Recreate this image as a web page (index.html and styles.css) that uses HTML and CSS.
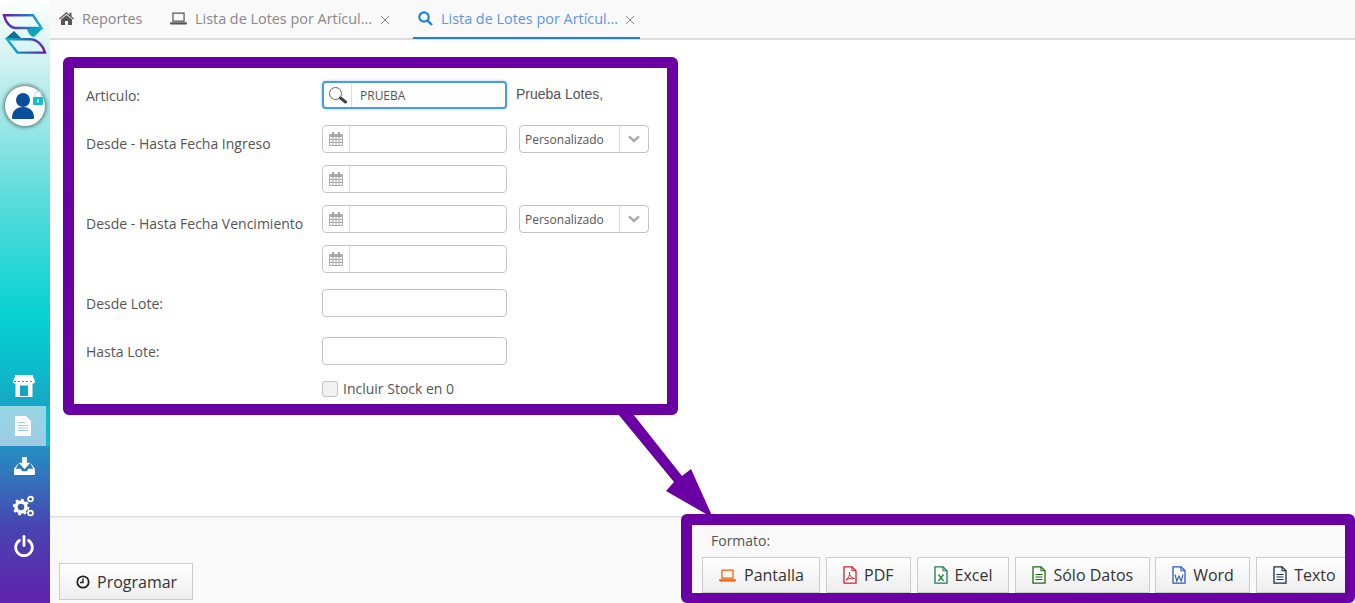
FILE: index.html
```html
<!DOCTYPE html>
<html lang="es">
<head>
<meta charset="utf-8">
<title>Lista de Lotes por Artículo</title>
<link rel="stylesheet" href="styles.css">
</head>
<body>
<svg class="defs" width="0" height="0">
  <defs>
    <symbol id="cal" viewBox="0 0 14 14"><path fill="#aaa" d="M3 0h2v2h4V0h2v2h2a1 1 0 0 1 1 1v10a1 1 0 0 1-1 1H1a1 1 0 0 1-1-1V3a1 1 0 0 1 1-1h2zM1 5v2h2.400V5zm3.400 0v2h2.100V5zm3.100 0v2h2.100V5zm3.100 0v2H13V5zM1 8v2h2.400V8zm3.400 0v2h2.100V8zm3.100 0v2h2.100V8zm3.100 0v2H13V8zM1 11v2h2.400v-2zm3.400 0v2h2.100v-2zm3.100 0v2h2.100v-2zm3.100 0v2H13v-2z"/></symbol>
    <symbol id="chev" viewBox="0 0 12 8"><path fill="none" stroke="#aaa" stroke-width="2.600" d="M1 1.400l5 4.600 5-4.600"/></symbol>
    <symbol id="laptop" viewBox="0 0 18 14"><path fill="none" stroke="currentColor" stroke-width="1.300" d="M3 1.200h12v8.600H3z"/><path fill="currentColor" d="M0 11h18v1.400a1 1 0 0 1-1 1H1a1 1 0 0 1-1-1z"/></symbol>
    <symbol id="file" viewBox="0 0 14 18"><path fill="#fff" fill-opacity=".6" stroke="currentColor" stroke-width="1.300" d="M1 .8h8l4 4v12.400H1z"/><path fill="none" stroke="currentColor" stroke-width="1.100" d="M9 .8v4h4"/></symbol>
  </defs>
</svg>
<div class="app">
  <aside class="sidebar">
    <svg class="logo" width="50" height="42" viewBox="0 0 50 42">
      <defs>
        <linearGradient id="lg1" x1="0" x2="1"><stop offset="0" stop-color="#6a1fa8"/><stop offset=".6" stop-color="#2a6fc0"/><stop offset="1" stop-color="#13b5cc"/></linearGradient>
        <linearGradient id="lg2" x1="0" x2="1"><stop offset="0" stop-color="#13b5cc"/><stop offset=".5" stop-color="#2a6fc0"/><stop offset="1" stop-color="#6a1fa8"/></linearGradient>
      </defs>
      <path fill="none" stroke="url(#lg1)" stroke-width="2.400" d="M4 2.200h29l8.500 12.800H16C10 15 5.500 9 4 2.200z"/>
      <path fill="none" stroke="url(#lg2)" stroke-width="2.400" d="M7 26.200h23c7 0 13 6 15 13.400H17.500z"/>
      <path fill="#0d6f8f" d="M6 25l8-7 7 7z"/>
      <path fill="#0fa6b4" d="M27 16h15l-8 8c-3 0-6-4-7-8z"/>
    </svg>
    <div class="avatar">
      <svg width="40" height="40" viewBox="0 0 40 40">
        <circle cx="18" cy="14" r="7" fill="#0b4f9c"/>
        <path fill="#0b4f9c" d="M7 32c0-7 4-11 11-11s11 4 11 11c0 1-1 1-2 1H9c-1 0-2 0-2-1z"/>
        <rect x="28" y="11" width="10" height="8" rx="1" fill="#12c0c4"/>
        <path fill="none" stroke="#bfe9ec" stroke-width="1.400" d="M30 11V8.500a3 3 0 0 1 6 0V11"/>
        <rect x="32.200" y="13.500" width="1.600" height="3" fill="#fff"/>
      </svg>
    </div>
    <nav class="side-nav">
      <a class="side-item">
        <svg width="24" height="24" viewBox="0 0 24 24"><path fill="#fff" d="M3.500 1h17L23 7.500c0 1.500-1 2-2 2h-.5V23h-17V9.500H3c-1 0-2-.5-2-2z"/><path fill="#14a4c4" d="M8 11.500h8V22H8z"/><path fill="none" stroke="#14a4c4" stroke-width="1" stroke-dasharray="2 2" d="M2 7.500h20"/></svg>
      </a>
      <a class="side-item side-item-active">
        <svg width="16" height="20" viewBox="0 0 16 20"><path fill="#fff" d="M0 0h11l5 5v15H0z"/><path fill="#9ccde6" d="M3 6h7v1H3zM3 9h10v1H3zM3 11.500h10v1H3zM3 14h10v1H3z"/></svg>
      </a>
      <a class="side-item">
        <svg width="21" height="18" viewBox="0 0 22 19"><path fill="#fff" d="M8.500 0h5v6H17l-6 7-6-7h3.500z"/><path fill="#fff" d="M4 7L0 12.500V19h22v-6.500L18 7h-.6l2.800 5.500H15l-1.500 2.500h-5L7 12.500H1.800L4.600 7z"/></svg>
      </a>
      <a class="side-item">
        <svg width="22" height="22" viewBox="0 0 22 22"><circle cx="8" cy="12" r="5" fill="none" stroke="#fff" stroke-width="3.400"/><circle cx="8" cy="12" r="7.300" fill="none" stroke="#fff" stroke-width="2" stroke-dasharray="2.800 2.900"/><circle cx="17.500" cy="4" r="2.400" fill="none" stroke="#fff" stroke-width="1.800"/><circle cx="17.500" cy="18" r="2.400" fill="none" stroke="#fff" stroke-width="1.800"/></svg>
      </a>
      <a class="side-item">
        <svg width="20" height="22" viewBox="0 0 20 22"><path fill="none" stroke="#fff" stroke-width="2.800" stroke-linecap="round" d="M5.500 5.500a8.300 8.300 0 1 0 9 0"/><path fill="none" stroke="#fff" stroke-width="2.800" stroke-linecap="round" d="M10 1.500v9"/></svg>
      </a>
    </nav>
  </aside>

  <div class="content">
    <header class="tabs">
      <a class="tab tab-home">
        <svg class="tab-icon" width="15" height="13" viewBox="0 0 15 13"><path fill="#555" d="M7.500 0L0 6.500l.8.900L7.500 1.800l6.700 5.600.8-.9-2.500-2.100V.800h-2v2.100z"/><path fill="#555" d="M7.500 3L2 7.600V13h4V9h3v4h4V7.600z"/></svg>
        <span>Reportes</span>
      </a>
      <a class="tab tab-second">
        <svg class="tab-icon tab-laptop" width="17" height="13"><use href="#laptop"/></svg>
        <span>Lista de Lotes por Artícul...</span>
        <svg class="tab-close" width="10" height="10" viewBox="0 0 10 10"><path fill="none" stroke="#888" d="M1 1l8 8M9 1l-8 8"/></svg>
      </a>
      <a class="tab tab-active">
        <svg class="tab-icon" width="15" height="15" viewBox="0 0 15 15"><circle cx="6" cy="6" r="4.700" fill="none" stroke="#1e7fe0" stroke-width="2.200"/><path fill="none" stroke="#1e7fe0" stroke-width="2.400" d="M9.500 9.500l4.500 4.500"/></svg>
        <span>Lista de Lotes por Artícul...</span>
        <svg class="tab-close" width="10" height="10" viewBox="0 0 10 10"><path fill="none" stroke="#888" d="M1 1l8 8M9 1l-8 8"/></svg>
      </a>
    </header>

    <main class="main">
      <form class="form">
        <div class="row row-articulo">
          <label class="label">Articulo:</label>
          <div class="input-group input-focus">
            <span class="addon addon-search">
              <svg width="20" height="18" viewBox="0 0 20 18"><circle cx="7.500" cy="7.500" r="6" fill="none" stroke="#666" stroke-width="1"/><path fill="none" stroke="#444" stroke-width="3" stroke-linecap="round" d="M12.500 12l5 4"/></svg>
            </span>
            <span class="value">PRUEBA</span>
          </div>
          <span class="desc">Prueba Lotes,</span>
        </div>

        <div class="row row-dates">
          <label class="label label-date">Desde - Hasta Fecha Ingreso</label>
          <div class="date-stack">
            <div class="input-group"><span class="addon"><svg width="14" height="14"><use href="#cal"/></svg></span></div>
            <div class="input-group"><span class="addon"><svg width="14" height="14"><use href="#cal"/></svg></span></div>
          </div>
          <div class="select"><span class="select-text">Personalizado</span><span class="select-arrow"><svg width="12" height="8"><use href="#chev"/></svg></span></div>
        </div>

        <div class="row row-dates">
          <label class="label label-date">Desde - Hasta Fecha Vencimiento</label>
          <div class="date-stack">
            <div class="input-group"><span class="addon"><svg width="14" height="14"><use href="#cal"/></svg></span></div>
            <div class="input-group"><span class="addon"><svg width="14" height="14"><use href="#cal"/></svg></span></div>
          </div>
          <div class="select"><span class="select-text">Personalizado</span><span class="select-arrow"><svg width="12" height="8"><use href="#chev"/></svg></span></div>
        </div>

        <div class="row row-lote">
          <label class="label">Desde Lote:</label>
          <div class="input-group"></div>
        </div>

        <div class="row row-lote-2">
          <label class="label">Hasta Lote:</label>
          <div class="input-group"></div>
        </div>

        <div class="row row-check">
          <span class="label"></span>
          <span class="checkbox"></span>
          <span class="check-text">Incluir Stock en 0</span>
        </div>
      </form>
    </main>

    <footer class="footer">
      <button class="btn btn-program" type="button">
        <svg width="14" height="14" viewBox="0 0 14 14"><circle cx="7" cy="7" r="5.700" fill="none" stroke="#222" stroke-width="1.800"/><path fill="none" stroke="#222" stroke-width="1.400" d="M7 3.500V7.500H4"/></svg>
        Programar
      </button>
      <div class="formats">
        <div class="format-label">Formato:</div>
        <div class="format-buttons">
          <button class="btn btn-wide" type="button"><svg class="fi-orange" width="17" height="13"><use href="#laptop"/></svg>Pantalla</button>
          <button class="btn" type="button">
            <svg class="fi-red" width="14" height="18"><use href="#file"/><path fill="none" stroke="#d81e2c" stroke-width="1" d="M3 14c2-1 4-5 3.500-8-.5 3 2 6 5 6.500-3-.5-6 0-8.500 1.500z"/></svg>PDF</button>
          <button class="btn" type="button">
            <svg class="fi-green" width="14" height="18"><use href="#file"/><path fill="none" stroke="#2c7a2c" stroke-width="1.300" d="M4.500 8.500l5 6.500M9.500 8.500l-5 6.500"/></svg>Excel</button>
          <button class="btn" type="button">
            <svg class="fi-lime" width="14" height="18"><use href="#file"/><path fill="none" stroke="#1f6b12" d="M3.500 8.500h7M3.500 11h7M3.500 13.500h7"/></svg>Sólo Datos</button>
          <button class="btn btn-word" type="button">
            <svg class="fi-blue" width="14" height="18"><use href="#file"/><path fill="none" stroke="#2a5caa" stroke-width="1.100" d="M3 8.500l1.800 6.500L7 10l2.200 5L11 8.500"/></svg>Word</button>
          <button class="btn" type="button">
            <svg class="fi-dark" width="14" height="18"><use href="#file"/><path fill="none" stroke="#1c2b4a" d="M3.500 8.500h7M3.500 11h7M3.500 13.500h7"/></svg>Texto</button>
        </div>
      </div>
    </footer>
  </div>
</div>

<div class="mark mark-form"></div>
<div class="mark mark-formats"></div>
<svg class="mark-arrow" width="110" height="110" viewBox="0 0 110 110">
  <path fill="#6a00a3" d="M1 0h15l49 62 9-7 22 49-47-27 8-9z"/>
</svg>
</body>
</html>
```
FILE: styles.css
```css
* { box-sizing: border-box; }
html, body { margin: 0; height: 100%; overflow: hidden; }
body { font-family: "Open Sans", "Liberation Sans", sans-serif; color: #555; background: #fff; }
.defs { position: absolute; }
.app { display: flex; width: 1355px; height: 603px; }

.sidebar {
  width: 50px; flex: none; display: flex; flex-direction: column; align-items: center;
  background: linear-gradient(180deg, #ffffff 0%, #b9ecec 15%, #5fdcdc 32%, #08d2d2 52%, #0cbccb 61%, #2a85c0 76%, #4a42b0 88%, #5f22ac 100%);
}
.logo { margin-top: 13px; display: block; }
.avatar {
  width: 40px; height: 40px; margin-top: 31px; border-radius: 50%; background-color: #fff; background-image: radial-gradient(circle, #fff 70%, #c9f0f0 100%);
  box-shadow: 0 0 4px 1px rgba(0,0,0,.55);
}
.avatar svg { display: block; }
.side-nav { margin-top: 240px; width: 100%; display: flex; flex-direction: column; }
.side-item { height: 40px; display: flex; align-items: center; justify-content: center; padding-right: 2px; }
.side-item-active { background: rgba(255,255,255,.55); border-right: 4px solid #0cbccb; padding-right: 0; }

.content { flex: 1; min-width: 0; display: flex; flex-direction: column; }
.tabs {
  height: 40px; flex: none; display: flex; background: #f9f9f9; border-bottom: 2px solid #ddd; padding-left: 9px; font-size: 14.4px; color: #888;
}
.tab { height: 39px; display: flex; align-items: center; padding: 0 5px 2px 0; white-space: nowrap; }
.tab-home { width: 111px; }
.tab-second { width: 243px; }
.tab-icon { margin-right: 8px; flex: none; }
.tab-laptop { color: #555; }
.tab-close { margin-left: 7px; flex: none; margin-top: 2px; }
.tab-second .tab-close { margin-left: 8px; }
.tab-active { width: 227px; padding-left: 5px; color: #5b96e8; border-bottom: 2px solid #1e7fe0; padding-bottom: 0; }

.main { flex: 1; min-height: 0; background: #fff; padding: 41px 0 0 36px; }
.form { display: flex; flex-direction: column; font-size: 14px; }
.row { display: flex; align-items: flex-start; }
.label { width: 236px; flex: none; line-height: 30px; color: #555; font-size: 14px; }
.label-date { padding-top: 4px; }
.row-articulo { margin-bottom: 16px; }
.row-dates { margin-bottom: 12px; }
.row-dates + .row-lote { margin-top: 4px; }
.row-lote { margin-bottom: 20px; }
.row-lote-2 { margin-bottom: 16px; }
.row-check { align-items: center; height: 16px; }
.row-articulo, .row-lote, .row-lote-2 { height: 28px; }

.input-group { width: 185px; height: 28px; flex: none; display: flex; align-items: stretch; border: 1px solid #c4c4c4; border-radius: 4px; background: #fff; }
.input-focus { border: 2px solid #4a9ae8; box-shadow: 0 0 3px rgba(74,154,232,.5); }
.addon { width: 27px; flex: none; display: flex; align-items: center; justify-content: center; border-right: 1px solid #ddd; }
.addon svg { display: block; }
.addon-search { width: 28px; }
.value { font-size: 12px; line-height: 26px; padding-left: 8px; color: #555; }
.desc { margin-left: 9px; font-family: "Liberation Sans", sans-serif; font-size: 14px; line-height: 26px; color: #555; }
.date-stack { display: flex; flex-direction: column; gap: 12px; }
.select { width: 130px; height: 28px; margin-left: 12px; display: flex; border: 1px solid #c4c4c4; border-radius: 4px; background: #fff; }
.select-text { width: 100px; padding-left: 5px; font-size: 12px; line-height: 28px; color: #555; border-right: 1px solid #ddd; }
.select-arrow { flex: 1; display: flex; align-items: center; justify-content: center; }
.select-arrow svg { display: block; }
.checkbox { width: 16px; height: 16px; flex: none; border: 1px solid #c4c4c4; border-radius: 3px; background: #f2f2f2; }
.check-text { margin-left: 5px; font-size: 14px; color: #555; line-height: 16px; }

.footer { height: 87px; flex: none; display: flex; justify-content: space-between; background: #f9f9f9; border-top: 1px solid #ddd; box-shadow: inset 0 1px 1px rgba(0,0,0,.05); padding-left: 9px; }
.btn {
  height: 36px; display: inline-flex; align-items: center; gap: 7px; padding: 0 16px; border: 1px solid #ccc; background: linear-gradient(180deg, #ffffff, #eeeeee);
  font-family: "Open Sans", "Liberation Sans", sans-serif; font-size: 16px; color: #333; white-space: nowrap;
}
.btn svg { flex: none; display: block; }
.btn-wide { gap: 8px; width: 118px; }
.btn-word { width: 95px; margin-left: -1px; }
.btn-program { height: 37px; margin-top: 46px; padding: 0 15px 0 16px; width: 134px; }
.formats { width: 653px; padding: 14px 0 0 0; }
.format-label { font-size: 14px; line-height: 20px; padding-left: 9px; height: 20px; color: #555; }
.format-buttons { display: flex; gap: 6px; margin-top: 6px; }
.fi-orange { color: #f06000; }
.fi-red { color: #d81e2c; }
.fi-green { color: #1c7a56; }
.fi-lime { color: #1f6b12; }
.fi-blue { color: #2a5caa; }
.fi-dark { color: #1c2b4a; }

.mark { position: absolute; border: 11px solid #6a00a3; border-radius: 6px; pointer-events: none; }
.mark-form { left: 63px; top: 57px; width: 615px; height: 358px; }
.mark-formats { left: 681px; top: 514px; width: 674px; height: 89px; border-width: 11px 10px 10px 11px; }
.mark-arrow { position: absolute; left: 617px; top: 414px; }
```
